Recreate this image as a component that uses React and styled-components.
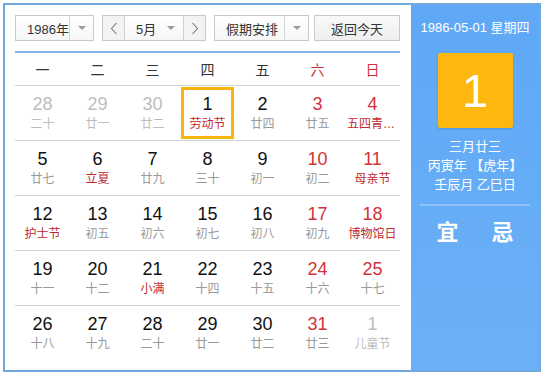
import React from "react";
import styled, { createGlobalStyle } from "styled-components";

const Global = createGlobalStyle`
  html, body { margin: 0; padding: 0; background: #fff; }
  body { font-family: "Liberation Sans", "Noto Sans CJK SC", sans-serif; }
  * { box-sizing: border-box; }
`;

const Frame = styled.div`
  margin: 3px;
  width: 538px;
  height: 369px;
  border: 2px solid #72a9dd;
  display: flex;
  background: #fff;
`;

const Left = styled.div`
  width: 406px;
  padding: 10px 11px 0 10px;
  display: flex;
  flex-direction: column;
`;

const Toolbar = styled.div`
  display: flex;
  height: 26px;
  align-items: stretch;
`;

const Box = styled.div`
  display: flex;
  align-items: stretch;
  border: 1px solid #c9c9c9;
  background: linear-gradient(#ffffff, #f6f6f6);
  width: ${(p) => p.$w}px;
  margin-right: ${(p) => p.$mr || 0}px;
  font-size: 13px;
  color: #333;
`;

const SelText = styled.div`
  flex: 1;
  display: flex;
  align-items: center;
  padding-left: ${(p) => p.$pl}px;
`;

const ArrowArea = styled.div`
  width: 24px;
  display: flex;
  align-items: center;
  justify-content: center;
  border-left: ${(p) => (p.$div ? "1px solid #d6d6d6" : "none")};
`;

const Tri = styled.span`
  width: 0;
  height: 0;
  border-left: 4px solid transparent;
  border-right: 4px solid transparent;
  border-top: 4px solid #9a9a9a;
`;

const NavBtn = styled.div`
  width: 22px;
  display: flex;
  align-items: center;
  justify-content: center;
  background: #f3f3f3;
  border-${(p) => p.$side}: 1px solid #d0d0d0;
`;

const TodayBtn = styled.div`
  width: 86px;
  border: 1px solid #c9c9c9;
  background: linear-gradient(#f9f9f9, #efefef);
  display: flex;
  align-items: center;
  justify-content: center;
  font-size: 13px;
  color: #333;
  margin-left: 5px;
`;

const BlueLine = styled.div`
  margin-top: 10px;
  height: 2px;
  background: #82b5e6;
`;

const Header = styled.div`
  display: grid;
  grid-template-columns: repeat(7, 55px);
  height: 33px;
  border-bottom: 1px solid #d2d2d2;
`;

const WeekDay = styled.div`
  display: flex;
  align-items: center;
  justify-content: center;
  font-size: 14px;
  color: ${(p) => (p.$red ? "#cf3038" : "#333")};
`;

const Row = styled.div`
  display: grid;
  grid-template-columns: repeat(7, 55px);
  height: 55px;
  border-bottom: ${(p) => (p.$last ? "none" : "1px solid #d2d2d2")};
`;

const Cell = styled.div`
  margin: 1px;
  border: 3px solid ${(p) => (p.$sel ? "#f8b60c" : "transparent")};
  display: flex;
  flex-direction: column;
  align-items: center;
  padding-top: 3px;
`;

const Num = styled.div`
  font-size: 18px;
  line-height: 22px;
  color: ${(p) => p.$c};
`;

const Lunar = styled.div`
  font-size: 12px;
  line-height: 18px;
  max-width: 51px;
  white-space: nowrap;
  overflow: hidden;
  text-overflow: ellipsis;
  flex-shrink: 0;
  color: ${(p) => p.$c};
`;

const Right = styled.div`
  flex: 1;
  background: linear-gradient(#5ea8f6, #6cb1f7);
  display: flex;
  flex-direction: column;
  align-items: center;
  color: #fff;
  padding-top: 13px;
`;

const DateLine = styled.div`
  font-size: 13px;
  line-height: 20px;
`;

const BigDay = styled.div`
  margin-top: 15px;
  width: 75px;
  height: 75px;
  background: #fdb70f;
  border-radius: 2px;
  box-shadow: 0 1px 2px rgba(40, 80, 140, 0.25);
  display: flex;
  align-items: center;
  justify-content: center;
  font-size: 47px;
  color: #fff;
`;

const Info = styled.div`
  margin-top: 9px;
  font-size: 13px;
  line-height: 19px;
  text-align: center;
`;

const Sep = styled.div`
  margin-top: 10px;
  width: 110px;
  height: 2px;
  background: #8ec3fa;
`;

const YiJi = styled.div`
  margin-top: 12px;
  display: flex;
  gap: 33px;
  font-size: 22px;
  line-height: 30px;
  font-weight: bold;
`;

const Chevron = ({ dir }) => (
  <svg width="8" height="13" viewBox="0 0 8 13">
    <path
      d={dir === "l" ? "M6.5 1 L1.5 6.5 L6.5 12" : "M1.5 1 L6.5 6.5 L1.5 12"}
      fill="none"
      stroke="#777"
      strokeWidth="1.1"
    />
  </svg>
);

const BLACK = "#111";
const RED = "#d2323a";
const FEST = "#bf2a30";
const GRAY = "#999";
const LIGHT = "#bdbdbd";

const weeks = [
  [["28", "二十", "o"], ["29", "廿一", "o"], ["30", "廿二", "o"], ["1", "劳动节", "n", 1, 1], ["2", "廿四", "n"], ["3", "廿五", "w"], ["4", "五四青年节", "w", 1]],
  [["5", "廿七", "n"], ["6", "立夏", "n", 1], ["7", "廿九", "n"], ["8", "三十", "n"], ["9", "初一", "n"], ["10", "初二", "w"], ["11", "母亲节", "w", 1]],
  [["12", "护士节", "n", 1], ["13", "初五", "n"], ["14", "初六", "n"], ["15", "初七", "n"], ["16", "初八", "n"], ["17", "初九", "w"], ["18", "博物馆日", "w", 1]],
  [["19", "十一", "n"], ["20", "十二", "n"], ["21", "小满", "n", 1], ["22", "十四", "n"], ["23", "十五", "n"], ["24", "十六", "w"], ["25", "十七", "w"]],
  [["26", "十八", "n"], ["27", "十九", "n"], ["28", "二十", "n"], ["29", "廿一", "n"], ["30", "廿二", "n"], ["31", "廿三", "w"], ["1", "儿童节", "o"]],
];

const weekdays = ["一", "二", "三", "四", "五", "六", "日"];

export default function App() {
  return (
    <>
      <Global />
      <Frame>
        <Left>
          <Toolbar>
            <Box $w={79} $mr={8}>
              <SelText $pl={11}>1986年</SelText>
              <ArrowArea $div><Tri /></ArrowArea>
            </Box>
            <Box $w={104} $mr={8}>
              <NavBtn $side="right"><Chevron dir="l" /></NavBtn>
              <SelText $pl={11}>5月</SelText>
              <ArrowArea><Tri /></ArrowArea>
              <NavBtn $side="left"><Chevron dir="r" /></NavBtn>
            </Box>
            <Box $w={95}>
              <SelText $pl={11}>假期安排</SelText>
              <ArrowArea $div><Tri /></ArrowArea>
            </Box>
            <TodayBtn>返回今天</TodayBtn>
          </Toolbar>
          <BlueLine />
          <Header>
            {weekdays.map((d, i) => (
              <WeekDay key={d} $red={i >= 5}>{d}</WeekDay>
            ))}
          </Header>
          {weeks.map((w, wi) => (
            <Row key={wi} $last={wi === weeks.length - 1}>
              {w.map(([n, l, k, fest, sel], ci) => {
                const numC = k === "o" ? LIGHT : k === "w" ? RED : BLACK;
                const lunC = k === "o" ? LIGHT : fest ? FEST : GRAY;
                return (
                  <Cell key={ci} $sel={!!sel}>
                    <Num $c={numC}>{n}</Num>
                    <Lunar $c={lunC}>{l}</Lunar>
                  </Cell>
                );
              })}
            </Row>
          ))}
        </Left>
        <Right>
          <DateLine>1986-05-01 星期四</DateLine>
          <BigDay>1</BigDay>
          <Info>
            三月廿三
            <br />
            丙寅年 【虎年】
            <br />
            壬辰月 乙巳日
          </Info>
          <Sep />
          <YiJi>
            <span>宜</span>
            <span>忌</span>
          </YiJi>
        </Right>
      </Frame>
    </>
  );
}
